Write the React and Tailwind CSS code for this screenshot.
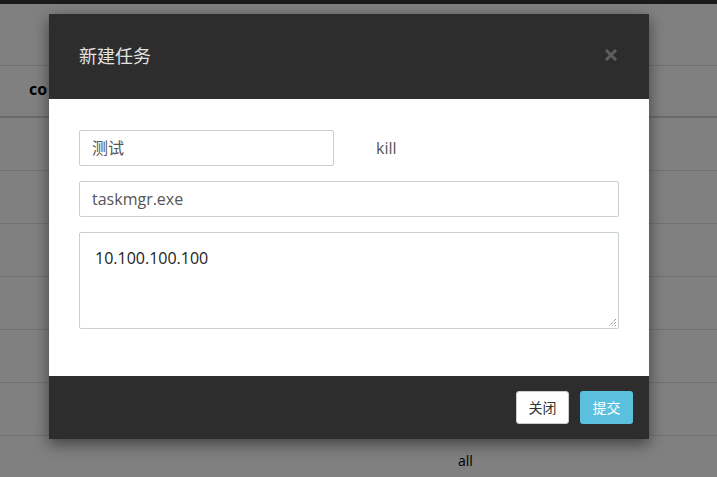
import React from "react";

const font = {
  fontFamily: '"Open Sans", "Noto Sans CJK SC", sans-serif',
};

function BackgroundTable() {
  // page behind the overlay, already darkened
  const rows = ["", "", "", "", "", ""];
  return (
    <div className="flex flex-col">
      <div className="h-[4px] bg-[#1b1b1b]" />
      <div className="h-[62px] border-b border-[#727272]" />
      <div className="flex h-[52px] items-center border-b-2 border-[#6b6b6b] pb-[5px] pl-[29px] text-[16px] font-bold text-black">
        co
      </div>
      {rows.map((r, i) => (
        <div key={i} className="h-[53px] border-b border-[#727272]" />
      ))}
      <div className="flex h-[53px] items-center pb-[4px] pl-[458px] text-[14px] text-black">all</div>
    </div>
  );
}

export default function App() {
  return (
    <div className="relative h-[477px] w-[717px] overflow-hidden bg-[#808080]" style={font}>
      <BackgroundTable />

      {/* modal */}
      <div className="absolute left-[49px] top-[14px] flex w-[600px] flex-col rounded-[2px] shadow-[0_5px_15px_rgba(0,0,0,0.5)]">
        <div className="flex h-[85px] items-center justify-between bg-[#2d2d2d] pl-[30px] pr-[32px]">
          <span className="text-[18px] text-[#e2e2e2]">新建任务</span>
          <svg className="mb-[4px]" width="12" height="12" viewBox="0 0 12 12">
            <path d="M2 2 L10 10 M10 2 L2 10" stroke="#5e5e5e" strokeWidth="3" strokeLinecap="square" />
          </svg>
        </div>

        <div className="flex flex-col gap-[15px] bg-white px-[30px] pb-[47px] pt-[31px]">
          <div className="flex items-center">
            <div className="flex h-[36px] w-[255px] items-center rounded-[2px] border border-[#c8d0d1] px-[12px] text-[16px] text-[#555]">
              测试
            </div>
            <span className="ml-[42px] text-[16px] text-[#555]">kill</span>
          </div>
          <div className="flex h-[36px] items-center rounded-[2px] border border-[#c8d0d1] px-[12px] text-[16px] text-[#555]">
            taskmgr.exe
          </div>
          <div className="relative h-[97px] rounded-[2px] border border-[#c8d0d1] px-[15px] pt-[13px] text-[16px] text-[#222]">
            10.100.100.100
            <svg className="absolute bottom-[1px] right-[1px]" width="9" height="9" viewBox="0 0 9 9">
              <path d="M8 1 L1 8 M8 4 L4 8 M8 7 L7 8" stroke="#666" strokeWidth="1" strokeDasharray="1 1" />
            </svg>
          </div>
        </div>

        <div className="flex h-[63px] items-center justify-end gap-[11px] bg-[#2d2d2d] pr-[16px]">
          <button className="flex h-[33px] w-[53px] items-center justify-center rounded-[3px] border border-[#ccc] bg-white text-[14px] text-[#333]">
            关闭
          </button>
          <button className="flex h-[33px] w-[53px] items-center justify-center rounded-[3px] bg-[#5bc0de] text-[14px] text-white">
            提交
          </button>
        </div>
      </div>
    </div>
  );
}
